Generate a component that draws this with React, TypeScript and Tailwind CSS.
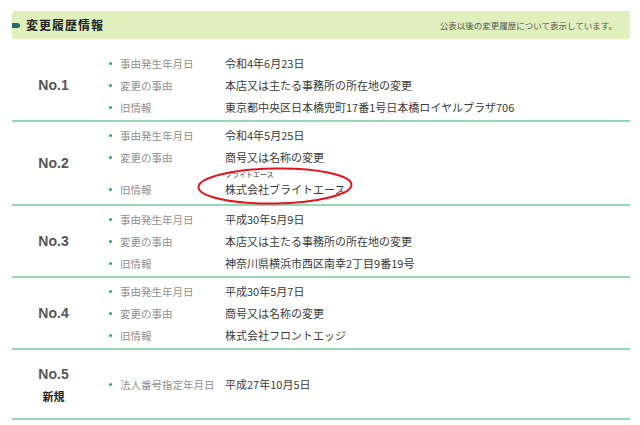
const jp = "font-['Noto_Sans_CJK_JP',sans-serif]"

type Item = { label: string; value: string; ruby?: string; circled?: boolean }
type Entry = { no: string; items: Item[] }

const entries: Entry[] = [
  {
    no: 'No.1',
    items: [
      { label: '事由発生年月日', value: '令和4年6月23日' },
      { label: '変更の事由', value: '本店又は主たる事務所の所在地の変更' },
      { label: '旧情報', value: '東京都中央区日本橋兜町17番1号日本橋ロイヤルプラザ706' },
    ],
  },
  {
    no: 'No.2',
    items: [
      { label: '事由発生年月日', value: '令和4年5月25日' },
      { label: '変更の事由', value: '商号又は名称の変更' },
      { label: '旧情報', value: '株式会社ブライトエース', ruby: 'ブライトエース', circled: true },
    ],
  },
  {
    no: 'No.3',
    items: [
      { label: '事由発生年月日', value: '平成30年5月9日' },
      { label: '変更の事由', value: '本店又は主たる事務所の所在地の変更' },
      { label: '旧情報', value: '神奈川県横浜市西区南幸2丁目9番19号' },
    ],
  },
  {
    no: 'No.4',
    items: [
      { label: '事由発生年月日', value: '平成30年5月7日' },
      { label: '変更の事由', value: '商号又は名称の変更' },
      { label: '旧情報', value: '株式会社フロントエッジ' },
    ],
  },
]

function Row({ item }: { item: Item }) {
  return (
    <li className={`flex items-end ${item.ruby ? 'h-[34px] pb-[2px]' : 'h-[22px]'}`}>
      <div className="flex h-[21px] items-center">
        <span className="ml-[14px] h-[3px] w-[3px] rounded-full bg-[#2ea35c]" />
        <span className="ml-[8px] w-[105px] text-[10.5px] leading-[21px] text-[#8f8f8f]">{item.label}</span>
      </div>
      <div className="relative text-[11px] text-[#3a3a3a]">
        {item.ruby && <div className="text-[7px] leading-[9px] text-[#444]">{item.ruby}</div>}
        <div className="leading-[21px]">{item.value}</div>
        {item.circled && (
          <svg className="absolute left-[-28px] top-[-4px]" width="158" height="40" viewBox="0 0 158 40">
            <ellipse cx="78" cy="20" rx="76.5" ry="17.5" fill="none" stroke="#e3141b" strokeWidth="2" transform="rotate(-1 78 20)" />
          </svg>
        )}
      </div>
    </li>
  )
}

export default function App() {
  return (
    <div className={`h-[425px] w-[640px] bg-white pl-[12px] pr-[10px] pt-[11px] ${jp}`}>
      {/* header */}
      <div className="flex h-[28px] items-center justify-between rounded-[3px] bg-[#e0f0bd] pr-[13px]">
        <div className="flex items-center">
          <span className="h-[5px] w-[8px] rounded-r-full rounded-l-[2px] bg-[#1d6a70]" />
          <span className="ml-[6px] text-[12px] font-bold tracking-[1px] text-[#222]">変更履歴情報</span>
        </div>
        <span className="text-[8.5px] text-[#555]">公表以後の変更履歴について表示しています。</span>
      </div>

      <div className="mt-[11px]">
        {entries.map((e) => (
          <div key={e.no} className="flex items-center border-b-2 border-[#94d7b5] py-[2px]">
            <div className="w-[83px] text-center font-['Liberation_Sans',sans-serif] text-[14px] font-bold text-[#555]">
              {e.no}
            </div>
            <ul>
              {e.items.map((it) => (
                <Row key={it.label} item={it} />
              ))}
            </ul>
          </div>
        ))}

        {/* No.5 */}
        <div className="flex h-[70px] items-center border-b-2 border-[#94d7b5]">
          <div className="flex w-[83px] flex-col items-center">
            <span className="font-['Liberation_Sans',sans-serif] text-[14px] font-bold leading-[20px] text-[#555]">No.5</span>
            <span className="mt-[4px] text-[11px] font-bold text-[#222]">新規</span>
          </div>
          <ul>
            <Row item={{ label: '法人番号指定年月日', value: '平成27年10月5日' }} />
          </ul>
        </div>
      </div>
    </div>
  )
}
